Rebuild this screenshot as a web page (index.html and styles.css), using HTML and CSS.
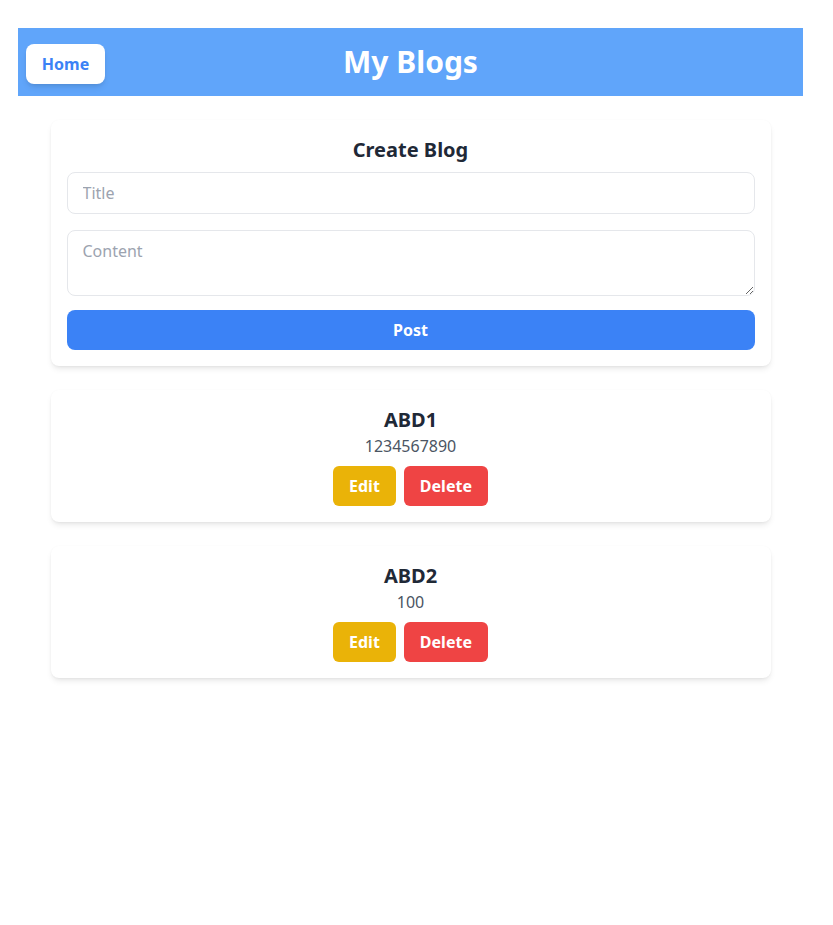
FILE: index.html
```html
<!DOCTYPE html>
<html>
<head>
<meta charset="utf-8">
<link rel="stylesheet" href="styles.css">
</head>
<body>
<div class="page">
  <header class="topbar">
    <div class="left"><button class="home-btn">Home</button></div>
    <h1 class="title">My Blogs</h1>
    <div></div>
  </header>
  <main class="content">
    <section class="card create">
      <h2 class="card-title">Create Blog</h2>
      <input class="field" type="text" placeholder="Title">
      <textarea class="field area" rows="2" placeholder="Content"></textarea>
      <button class="post-btn">Post</button>
    </section>
    <section class="card post">
      <h2 class="card-title">ABD1</h2>
      <p class="post-body">1234567890</p>
      <div class="actions">
        <button class="btn edit">Edit</button>
        <button class="btn delete">Delete</button>
      </div>
    </section>
    <section class="card post">
      <h2 class="card-title">ABD2</h2>
      <p class="post-body">100</p>
      <div class="actions">
        <button class="btn edit">Edit</button>
        <button class="btn delete">Delete</button>
      </div>
    </section>
  </main>
</div>
</body>
</html>
```
FILE: styles.css
```css
* { box-sizing: border-box; }
html, body { min-height: 100%; }
body {
  margin: 0;
  font-family: "Noto Sans", "Open Sans", sans-serif;
  background: #fff;
  color: #1f2937;
}
.page {
  padding: 28px 30px 40px 18px;
}
.topbar {
  background: #60a5fa;
  height: 68px;
  display: grid;
  grid-template-columns: 1fr auto 1fr;
  align-items: center;
  padding: 4px 8px 0 8px;
}
.home-btn {
  font-family: inherit;
  font-weight: 700;
  font-size: 16px;
  color: #3b82f6;
  background: #fff;
  border: none;
  border-radius: 8px;
  height: 40px;
  width: 79px;
  padding: 0;
  box-shadow: 0 4px 6px -1px rgba(0,0,0,0.1), 0 2px 4px -2px rgba(0,0,0,0.1);
}
.title {
  margin: 0;
  color: #fff;
  font-size: 30px;
  line-height: 36px;
  font-weight: 700;
  margin-top: -4px;
}
.content {
  width: 720px;
  margin: 24px auto 0;
  display: flex;
  flex-direction: column;
  gap: 24px;
}
.card {
  background: #fff;
  border-radius: 8px;
  padding: 16px;
  box-shadow: 0 4px 6px -1px rgba(0,0,0,0.08), 0 2px 4px -2px rgba(0,0,0,0.08), 0 0 2px rgba(0,0,0,0.03);
  display: flex;
  flex-direction: column;
}
.card-title {
  margin: 0;
  text-align: center;
  font-size: 20px;
  line-height: 28px;
  font-weight: 700;
  color: #1f2937;
}
.create .card-title { margin-bottom: 8px; }
.field {
  display: block;
  width: 100%;
  font-family: inherit;
  font-size: 16px;
  line-height: 24px;
  padding: 8px 15px;
  border: 1px solid #e5e7eb;
  border-radius: 8px;
  color: #1f2937;
  outline: none;
  margin: 0 0 16px;
}
.field::placeholder { color: #9ca3af; }
.area {
  height: 66px;
  resize: vertical;
  margin-bottom: 14px;
}
.post-btn {
  font-family: inherit;
  font-size: 16px;
  font-weight: 700;
  color: #fff;
  background: #3b82f6;
  border: none;
  border-radius: 8px;
  height: 40px;
}
.post-body {
  margin: 0;
  text-align: center;
  font-size: 16px;
  line-height: 24px;
  color: #4b5563;
}
.actions {
  display: flex;
  justify-content: center;
  gap: 8px;
  margin-top: 8px;
}
.btn {
  font-family: inherit;
  font-size: 16px;
  font-weight: 700;
  color: #fff;
  border: none;
  border-radius: 6px;
  height: 40px;
  padding: 0 16px;
}
.edit { background: #eab308; }
.delete { background: #ef4444; }
```
